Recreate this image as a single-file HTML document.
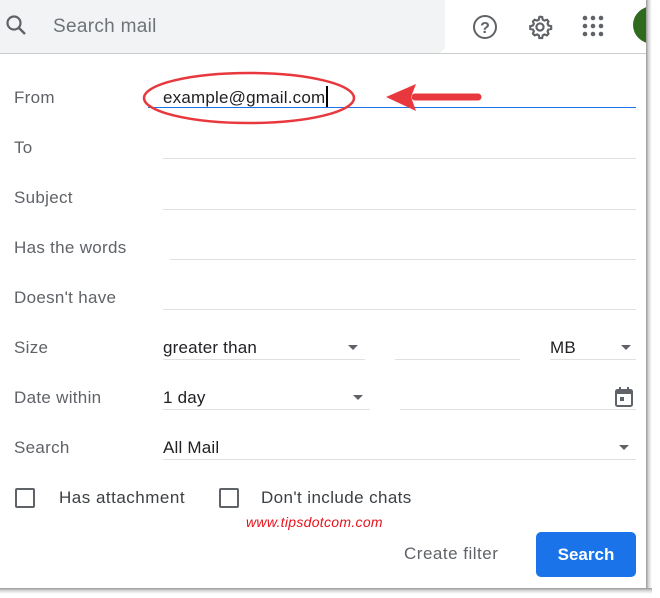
<!DOCTYPE html>
<html><head><style>
body{margin:0;width:660px;height:598px;background:#fff;position:relative;overflow:hidden;font-family:"Liberation Sans",Arial,sans-serif;color:#3c4043}
.a{position:absolute}
.lbl{position:absolute;left:14px;font-size:17px;color:#5f6368;letter-spacing:0.3px}
.ln{position:absolute;height:1px;background:#e0e0e0}
.val{position:absolute;font-size:17px;color:#202124;letter-spacing:0.2px}
.tri{position:absolute;width:0;height:0;border-left:5px solid transparent;border-right:5px solid transparent;border-top:5px solid #5f6368}
.cb{position:absolute;width:16px;height:16px;border:2px solid #5f6368;border-radius:2px}
</style></head><body>
<div class="a" style="left:0;top:0;width:445px;height:53px;background:#f1f3f4;border-radius:0 0 8px 0"></div>
<div class="a" style="left:0;top:53px;width:646px;height:1px;background:#ccc"></div>
<svg class="a" style="left:5px;top:14px" width="24" height="24" viewBox="0 0 24 24"><circle cx="9" cy="9" r="6.5" fill="none" stroke="#5f6368" stroke-width="2.2"/><path d="M14 14l6 6" stroke="#5f6368" stroke-width="2.4"/></svg>
<div class="a" style="left:53px;top:16px;font-size:19px;color:#6f7378;letter-spacing:0.3px">Search mail</div>
<svg class="a" style="left:472px;top:14px" width="26" height="26" viewBox="0 0 26 26"><circle cx="13" cy="13" r="11" fill="none" stroke="#5f6368" stroke-width="2"/><text x="13" y="19" font-size="16" font-weight="bold" text-anchor="middle" fill="#5f6368" font-family="Liberation Sans">?</text></svg>
<svg class="a" style="left:527px;top:14px" width="26" height="26" viewBox="0 0 24 24"><path d="M12 2.5l2 .3.5 2.4 1.6.9 2.3-.8 1.4 1.5-.8 2.3.9 1.6 2.4.5v2.6l-2.4.5-.9 1.6.8 2.3-1.4 1.5-2.3-.8-1.6.9-.5 2.4h-2.6l-.5-2.4-1.6-.9-2.3.8-1.5-1.5.8-2.3-.9-1.6-2.4-.5v-2.6l2.4-.5.9-1.6-.8-2.3 1.5-1.5 2.3.8 1.6-.9.5-2.4z" fill="none" stroke="#5f6368" stroke-width="2"/><circle cx="12" cy="12" r="3.3" fill="none" stroke="#5f6368" stroke-width="2"/></svg>
<svg class="a" style="left:582px;top:15px" width="22" height="22" viewBox="0 0 22 22" fill="#5f6368"><circle cx="3" cy="3" r="2.3"/><circle cx="11" cy="3" r="2.3"/><circle cx="19" cy="3" r="2.3"/><circle cx="3" cy="11" r="2.3"/><circle cx="11" cy="11" r="2.3"/><circle cx="19" cy="11" r="2.3"/><circle cx="3" cy="19" r="2.3"/><circle cx="11" cy="19" r="2.3"/><circle cx="19" cy="19" r="2.3"/></svg>
<div class="a" style="left:633px;top:6px;width:13px;height:38px;overflow:hidden"><div style="width:40px;height:38px;border-radius:50%;background:#2e6b1e"></div></div>
<div class="a" style="left:646px;top:0;width:6px;height:592px;background:linear-gradient(90deg,#999,#ddd,#fff)"></div>
<div class="a" style="left:0;top:588px;width:652px;height:6px;background:linear-gradient(180deg,#999,#ddd,#fff)"></div>

<div class="lbl" style="top:88px">From</div>
<div class="lbl" style="top:138px">To</div>
<div class="lbl" style="top:188px">Subject</div>
<div class="lbl" style="top:238px">Has the words</div>
<div class="lbl" style="top:288px">Doesn't have</div>
<div class="lbl" style="top:338px">Size</div>
<div class="lbl" style="top:388px">Date within</div>
<div class="lbl" style="top:438px">Search</div>

<div class="val" style="left:163px;top:88px">example@gmail.com</div>
<div class="a" style="left:326px;top:86px;width:2px;height:22px;background:#000"></div>
<div class="a" style="left:148px;top:107px;width:488px;height:1px;background:#1a73e8"></div>
<div class="ln" style="left:163px;top:158px;width:473px"></div>
<div class="ln" style="left:163px;top:209px;width:473px"></div>
<div class="ln" style="left:170px;top:259px;width:466px"></div>
<div class="ln" style="left:163px;top:309px;width:473px"></div>
<div class="val" style="left:163px;top:338px">greater than</div><div class="tri" style="left:348px;top:345px"></div>
<div class="ln" style="left:163px;top:359px;width:202px"></div>
<div class="ln" style="left:395px;top:359px;width:125px"></div>
<div class="val" style="left:550px;top:338px">MB</div><div class="tri" style="left:621px;top:345px"></div>
<div class="ln" style="left:550px;top:359px;width:86px"></div>
<div class="val" style="left:163px;top:388px">1 day</div><div class="tri" style="left:353px;top:395px"></div>
<div class="ln" style="left:163px;top:409px;width:207px"></div>
<div class="ln" style="left:400px;top:409px;width:236px"></div>
<svg class="a" style="left:614px;top:386px" width="20" height="22" viewBox="0 0 20 22"><rect x="2" y="4" width="16" height="16" rx="1.5" fill="none" stroke="#5f6368" stroke-width="2"/><rect x="2" y="4" width="16" height="4" fill="#5f6368"/><rect x="5" y="1" width="2" height="4" fill="#5f6368"/><rect x="13" y="1" width="2" height="4" fill="#5f6368"/><rect x="6" y="11" width="4" height="4" fill="#5f6368"/></svg>
<div class="val" style="left:163px;top:438px">All Mail</div><div class="tri" style="left:619px;top:445px"></div>
<div class="ln" style="left:163px;top:459px;width:473px"></div>

<div class="cb" style="left:15px;top:488px"></div>
<div class="val" style="left:59px;top:488px;color:#3c4043;letter-spacing:0.5px">Has attachment</div>
<div class="cb" style="left:219px;top:488px"></div>
<div class="val" style="left:261px;top:488px;color:#3c4043;letter-spacing:0.4px">Don't include chats</div>
<div class="a" style="left:246px;top:514px;font-size:14px;font-style:italic;color:#e8121c;letter-spacing:0.3px">www.tipsdotcom.com</div>
<div class="a" style="left:404px;top:544px;font-size:17px;color:#5f6368;letter-spacing:0.5px">Create filter</div>
<div class="a" style="left:536px;top:532px;width:100px;height:45px;background:#1a73e8;border-radius:5px;color:#fff;font-size:17px;font-weight:bold;text-align:center;line-height:45px">Search</div>

<svg class="a" style="left:0;top:0" width="660" height="598"><ellipse cx="249" cy="98" rx="105" ry="25" fill="none" stroke="#e8383d" stroke-width="2.5"/><path d="M478 97H415" stroke="#e8383d" stroke-width="7" stroke-linecap="round"/><path d="M386 97L416 84L411 97L416 111Z" fill="#e8383d"/></svg>
</body></html>
